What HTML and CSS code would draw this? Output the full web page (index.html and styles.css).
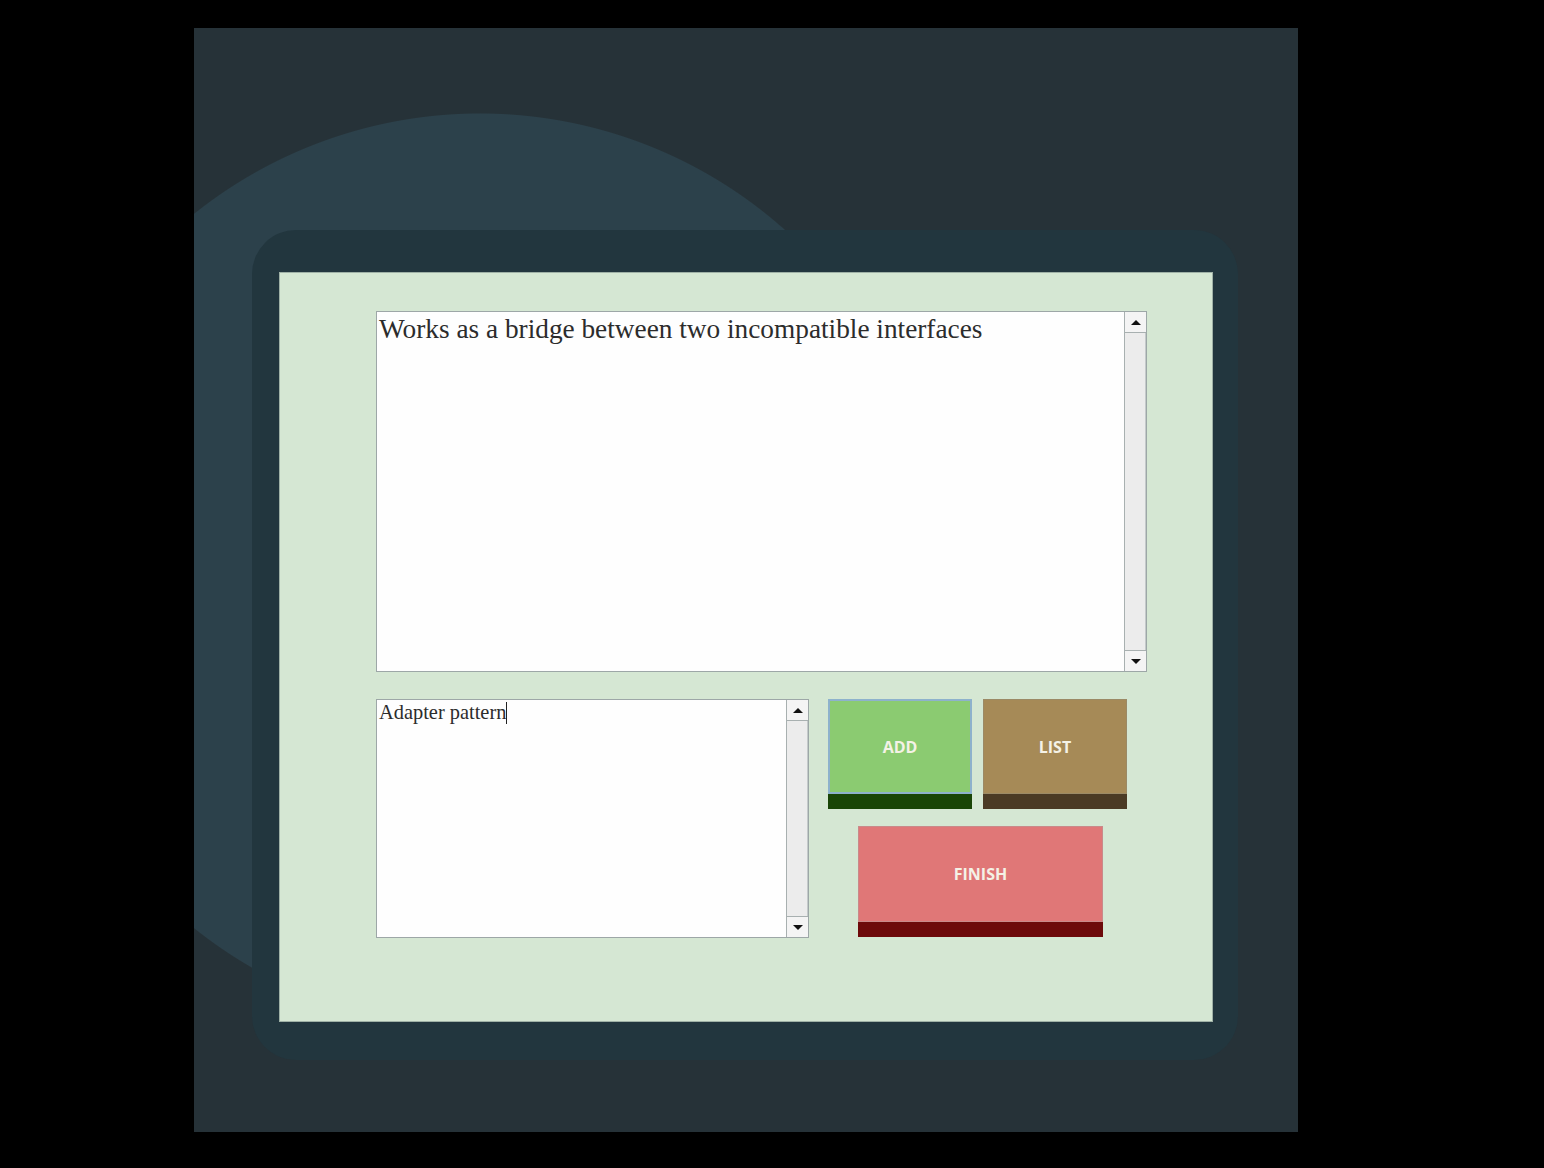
FILE: index.html
```html
<!DOCTYPE html>
<html>
<head>
<meta charset="utf-8">
<link rel="stylesheet" href="styles.css">
</head>
<body>
<div class="stage">
  <div class="frame">
    <div class="panel">
      <div class="box box-big">
        <div class="box-text text-big">Works as a bridge between two incompatible interfaces</div>
        <div class="sbar">
          <div class="sbtn"><span class="arrow-up"></span></div>
          <div class="strack"></div>
          <div class="sbtn sbtn-down"><span class="arrow-down"></span></div>
        </div>
      </div>
      <div class="row">
        <div class="box box-small">
          <div class="box-text text-small">Adapter pattern<span class="caret"></span></div>
          <div class="sbar">
            <div class="sbtn"><span class="arrow-up"></span></div>
            <div class="strack"></div>
            <div class="sbtn sbtn-down"><span class="arrow-down"></span></div>
          </div>
        </div>
        <div class="buttons">
          <div class="btn-row">
            <div class="btn btn-add"><div class="btn-face">ADD</div><div class="btn-base"></div></div>
            <div class="btn btn-list"><div class="btn-face">LIST</div><div class="btn-base"></div></div>
          </div>
          <div class="btn btn-finish"><div class="btn-face">FINISH</div><div class="btn-base"></div></div>
        </div>
      </div>
    </div>
  </div>
</div>
</body>
</html>
```
FILE: styles.css
```css
html, body {
  margin: 0;
  padding: 0;
  background: #000;
}
body {
  padding: 28px 0 0 194px;
  height: 1168px;
  box-sizing: border-box;
}
.stage {
  width: 1104px;
  height: 1104px;
  background: radial-gradient(circle 458px at 286px 543px, #2c414b 0, #2c414b 457px, #263238 458px);
  padding: 202px 0 0 58px;
  box-sizing: border-box;
}
.frame {
  width: 986px;
  height: 830px;
  background: #22363e;
  border-radius: 44px;
  padding: 42px 25px 38px 27px;
  box-sizing: border-box;
}
.panel {
  width: 934px;
  height: 750px;
  background: #d5e7d3;
  border: 1px solid #9fb1a6;
  box-sizing: border-box;
  padding: 38px 0 0 96px;
  display: flex;
  flex-direction: column;
  gap: 27px;
}
.box {
  background: #fefefe;
  border: 1px solid #9da7a7;
  box-sizing: border-box;
  display: flex;
}
.box-big {
  width: 771px;
  height: 361px;
}
.box-small {
  width: 433px;
  height: 239px;
}
.box-text {
  flex: 1;
  font-family: "Liberation Serif", "Times New Roman", serif;
  color: #2c2c2c;
  padding-left: 2px;
  white-space: nowrap;
}
.text-big {
  font-size: 27.3px;
  line-height: 30px;
  padding-top: 2px;
}
.text-small {
  font-size: 20.4px;
  line-height: 24px;
  padding-top: 0px;
}
.caret {
  display: inline-block;
  width: 1px;
  height: 22px;
  background: #222;
  vertical-align: -5px;
}
.sbar {
  width: 21px;
  border-left: 1px solid #a8b0b0;
  background: #eeeeee;
  display: flex;
  flex-direction: column;
}
.sbtn {
  height: 21px;
  border-bottom: 1px solid #a8b0b0;
  box-sizing: border-box;
  display: flex;
  align-items: center;
  justify-content: center;
  background: #f4f4f4;
}
.sbtn-down {
  border-bottom: none;
  border-top: 1px solid #a8b0b0;
}
.strack {
  flex: 1;
  background: #ececec;
  border-right: 1px solid #c4caca;
}
.arrow-up {
  width: 0;
  height: 0;
  border-left: 5px solid transparent;
  border-right: 5px solid transparent;
  border-bottom: 5px solid #111;
}
.arrow-down {
  width: 0;
  height: 0;
  border-left: 5px solid transparent;
  border-right: 5px solid transparent;
  border-top: 5px solid #111;
}
.row {
  display: flex;
  gap: 19px;
}
.buttons {
  display: flex;
  flex-direction: column;
  gap: 17px;
}
.btn-row {
  display: flex;
  gap: 11px;
}
.btn {
  display: flex;
  flex-direction: column;
}
.btn-face {
  flex: 1;
  display: flex;
  align-items: center;
  justify-content: center;
  font-family: "Open Sans", "Liberation Sans", sans-serif;
  font-weight: 700;
  font-size: 16px;
  color: #f4f2e6;
  box-sizing: border-box;
}
.btn-base {
  height: 15px;
}
.btn-add, .btn-list {
  width: 144px;
  height: 110px;
}
.btn-add .btn-face {
  background: #8bcb71;
  border: 2px solid #8eb2cc;
}
.btn-add .btn-base {
  background: #194506;
}
.btn-list .btn-face {
  background: #a68a57;
  border: 1px solid #9b8a66;
}
.btn-list .btn-base {
  background: #4a3a24;
}
.btn-finish {
  width: 245px;
  height: 111px;
  margin-left: 30px;
}
.btn-finish .btn-face {
  background: #e07777;
  border: 1px solid #c98a8a;
}
.btn-finish .btn-base {
  background: #6d0a0a;
}
```
